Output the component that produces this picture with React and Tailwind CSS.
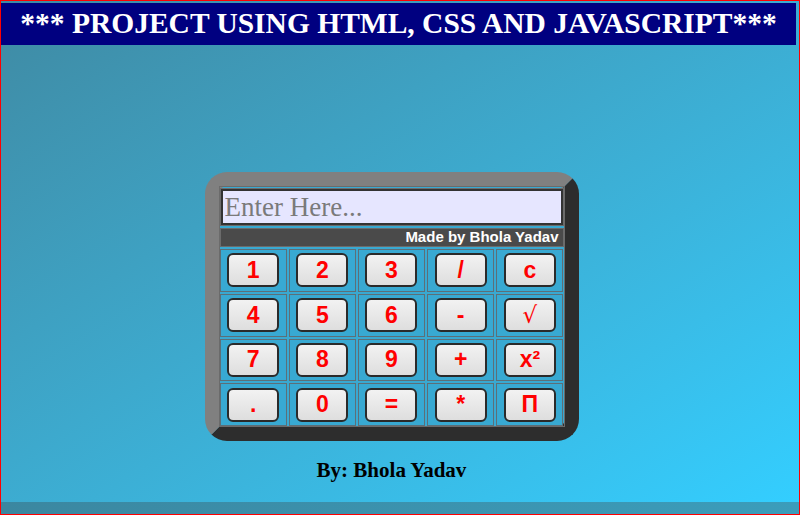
import React from 'react'

const keys = [
  ['1', '2', '3', '/', 'c'],
  ['4', '5', '6', '-', '√'],
  ['7', '8', '9', '+', 'x²'],
  ['.', '0', '=', '*', 'Π'],
]

// single calculator key
const Key = ({ label }) => {
  const thin = label === '√'
  return (
    <div className="flex items-center justify-center border border-[#5c6f78] bg-[#38a9d2]">
      <button
        className={
          'w-[52px] h-[34px] rounded-[6px] border-2 border-[#2a2a2a] bg-gradient-to-b from-[#f2f2f2] to-[#dedede] text-[#ff0000] text-[23px] leading-none flex items-center justify-center ' +
          (thin ? 'font-normal' : 'font-bold')
        }
        style={{ fontFamily: thin ? '"DejaVu Serif", serif' : '"Liberation Sans", Arial, sans-serif' }}
      >
        {label}
      </button>
    </div>
  )
}

export default function App() {
  return (
    <div className="w-[800px] h-[515px] border border-[#ff0000] overflow-hidden flex flex-col">
      <div className="h-[501px] shrink-0 bg-gradient-to-br from-[#3f8aa3] to-[#33ceff] flex flex-col">
        {/* Header */}
        <div className="w-[795px] mt-[2px] h-[42px] bg-[#000080] flex items-center justify-center">
          <h1
            className="text-white text-[29.5px] font-bold leading-none"
            style={{ fontFamily: '"Liberation Serif", "Times New Roman", serif' }}
          >
            *** PROJECT USING HTML, CSS AND JAVASCRIPT***
          </h1>
        </div>

        <div className="w-[781px] flex flex-col items-center">
          {/* Calculator */}
          <div className="mt-[127px] w-[374px] h-[269px] rounded-[22px] border-[14px] border-t-[#808080] border-l-[#808080] border-r-[#2d2d2d] border-b-[#2d2d2d] bg-[#38a9d2]">
            <div className="border border-[#6b6b6b] h-full flex flex-col gap-[2px] pt-px">
              <div className="border border-[#6b6b6b]">
                <input
                  placeholder="Enter Here..."
                  className="w-full h-[36px] bg-[#e6e6ff] border-2 border-[#333] px-[2px] text-[27px] text-black placeholder:text-[#7a7a7a] outline-none"
                  style={{ fontFamily: '"Liberation Serif", "Times New Roman", serif' }}
                />
              </div>
              <div
                className="h-[19px] border border-[#6b6b6b] bg-[#4a4a4a] text-white text-[15px] font-bold flex items-center justify-end pr-[4px]"
                style={{ fontFamily: '"Liberation Sans", Arial, sans-serif' }}
              >
                Made by Bhola Yadav
              </div>
              <div className="grid grid-cols-5 grid-rows-4 gap-[2px] flex-1">
                {keys.flat().map((k, i) => (
                  <Key key={i} label={k} />
                ))}
              </div>
            </div>
          </div>

          <p
            className="mt-[14px] text-[21px] font-bold text-black"
            style={{ fontFamily: '"Liberation Serif", "Times New Roman", serif' }}
          >
            By: Bhola Yadav
          </p>
        </div>
      </div>
      <div className="flex-1 bg-gradient-to-r from-[#3b87a0] to-[#3b9dbb]"></div>
    </div>
  )
}
